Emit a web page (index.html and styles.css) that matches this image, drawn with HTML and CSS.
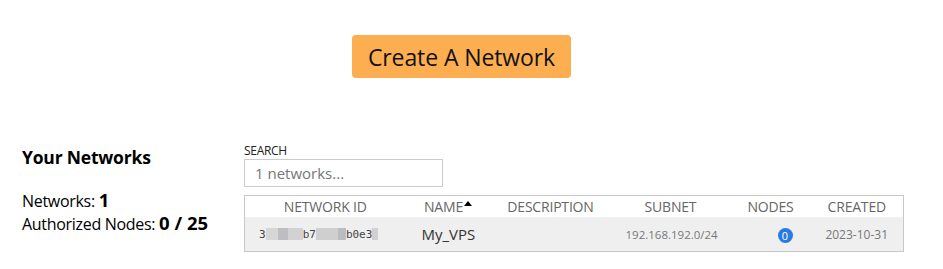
FILE: index.html
```html
<!DOCTYPE html>
<html>
<head>
<meta charset="utf-8">
<link rel="stylesheet" href="styles.css">
</head>
<body>
<div class="page">
  <div class="top">
    <button class="create">Create A Network</button>
  </div>
  <div class="main">
    <div class="side">
      <h2 class="title">Your Networks</h2>
      <div class="stat">Networks: <b>1</b></div>
      <div class="stat">Authorized Nodes: <b>0 / 25</b></div>
    </div>
    <div class="content">
      <label class="search-label">SEARCH</label>
      <input class="search" type="text" placeholder="1 networks...">
      <table class="nets">
        <colgroup>
          <col class="c-id"><col class="c-name"><col class="c-desc"><col class="c-sub"><col class="c-nodes"><col class="c-created">
        </colgroup>
        <thead>
          <tr>
            <th>NETWORK ID</th>
            <th>NAME<span class="caret"></span></th>
            <th>DESCRIPTION</th>
            <th>SUBNET</th>
            <th>NODES</th>
            <th>CREATED</th>
          </tr>
        </thead>
        <tbody>
          <tr>
            <td class="nid"><span class="t">3</span><span class="b b1"></span><span class="b b2"></span><span class="b b3"></span><span class="t">b7</span><span class="b b4"></span><span class="b b5"></span><span class="t">b0e3</span><span class="b b6"></span></td>
            <td class="name">My_VPS</td>
            <td></td>
            <td class="small r">192.168.192.0/24</td>
            <td class="r nodes"><span class="badge">0</span></td>
            <td class="small date r">2023-10-31</td>
          </tr>
        </tbody>
      </table>
    </div>
  </div>
</div>
</body>
</html>
```
FILE: styles.css
```css
html, body { margin: 0; padding: 0; background: #fff; }
body { font-family: "Open Sans", "Noto Sans", sans-serif; color: #000; }
.page { width: 943px; }
.top { display: flex; justify-content: center; padding-top: 35px; padding-right: 20px; }
.create {
  width: 219px; height: 43px;
  background: #fdae50; border: none; border-radius: 4px;
  font-family: "Open Sans", sans-serif; font-size: 23px; color: #111;
  padding: 0; letter-spacing: -0.1px;
}
.main { display: flex; margin-top: 63px; }
.side { width: 222px; padding-left: 22px; padding-top: 4px; }
.title { margin: 0 0 20px 0; font-size: 17.5px; font-weight: 700; line-height: 24px; letter-spacing: -0.2px; }
.stat { font-size: 16px; line-height: 22px; letter-spacing: -0.3px; }
.stat b { font-size: 18.5px; letter-spacing: 0; }
.content { width: 659px; display: flex; flex-direction: column; align-items: flex-start; padding-top: 2px; }
.search-label { font-size: 12px; line-height: 16px; letter-spacing: -0.3px; color: #222; }
.search {
  width: 199px; height: 28px; box-sizing: border-box; margin: 0 0 8px 0;
  border: 1px solid #ccc; padding: 0 10px; font-family: inherit; font-size: 15px;
}
.search::placeholder { color: #777; }
.nets { width: 659px; border-collapse: collapse; table-layout: fixed; border: 1px solid #c8c8c8; }
.c-id { width: 161px; } .c-name { width: 85px; } .c-desc { width: 120px; }
.c-sub { width: 120px; } .c-nodes { width: 80px; } .c-created { width: 93px; }
th { font-weight: 400; font-size: 14px; color: #666; height: 21px; padding: 0; text-align: center; letter-spacing: -0.2px; white-space: nowrap; }
.caret { display: inline-block; width: 0; height: 0; border-left: 4px solid transparent; border-right: 4px solid transparent; border-bottom: 5px solid #000; vertical-align: 6px; margin-left: 1px; }
tbody tr { background: #efefef; }
td { height: 34px; padding: 0 15px; font-size: 15px; color: #333; white-space: nowrap; }
td.name { padding-left: 16px; }
td.r { text-align: right; }
td.nodes { padding-right: 18px; }
td.small { font-size: 11.5px; color: #777; }
td.date { font-size: 12px; padding-left: 0; }
td.nid { padding-left: 14px; font-family: "DejaVu Sans Mono", monospace; font-size: 11px; color: #444; }
.nid .t { display: inline-block; vertical-align: middle; }
.nid .b { display: inline-block; height: 12px; vertical-align: middle; }
.b1 { width: 12px; background: #d6d6d6; }
.b2 { width: 10px; background: #bdbdc2; }
.b3 { width: 15px; background: #d2d2d2; }
.b4 { width: 22px; background: #cfcfcf; }
.b5 { width: 8px; background: #b9bec0; }
.b6 { width: 6px; background: #d0d0d0; }
.badge { display: inline-block; width: 15px; height: 15px; border-radius: 50%; background: #2a7ae2; color: #fff; font-size: 11px; line-height: 15px; text-align: center; vertical-align: middle; }
```
